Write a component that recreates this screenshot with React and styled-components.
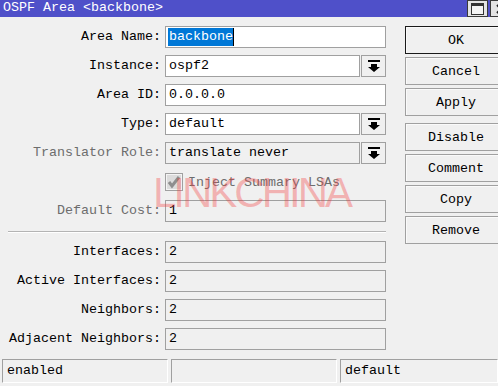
import React from 'react';
import styled, { createGlobalStyle } from 'styled-components';

const GlobalStyle = createGlobalStyle`
  html, body {
    margin: 0;
    padding: 0;
    background: #f0f0f0;
  }
  body {
    font-family: "Liberation Mono", "DejaVu Sans Mono", monospace;
    font-size: 13.33px;
  }
`;

const fields = [
  { label: 'Area Name:', value: 'backbone', selected: true },
  { label: 'Instance:', value: 'ospf2', select: true },
  { label: 'Area ID:', value: '0.0.0.0' },
  { label: 'Type:', value: 'default', select: true },
  { label: 'Translator Role:', value: 'translate never', select: true, disabled: true },
];

const stats = [
  { label: 'Interfaces:', value: '2' },
  { label: 'Active Interfaces:', value: '2' },
  { label: 'Neighbors:', value: '2' },
  { label: 'Adjacent Neighbors:', value: '2' },
];

const buttons = ['OK', 'Cancel', 'Apply', 'Disable', 'Comment', 'Copy', 'Remove'];

const DropArrow = () => (
  <svg width="12" height="12" viewBox="0 0 12 12">
    <rect x="0" y="0" width="12" height="2" fill="#000" />
    <path d="M3 4h6v3h3l-6 5l-6-5h3z" fill="#000" />
  </svg>
);

const Check = () => (
  <svg width="14" height="14" viewBox="0 0 14 14">
    <path d="M2 7l3 4l7-9" stroke="#8e8e8e" strokeWidth="3" fill="none" />
  </svg>
);

const App = () => (
  <>
    <GlobalStyle />
    <Window>
      <TitleBar>
        <span>OSPF Area &lt;backbone&gt;</span>
        <WinControls>
          <WinButton><MaxGlyph /></WinButton>
          <WinButton>
            <svg width="10" height="10" viewBox="0 0 10 10">
              <path d="M1 1l8 8M9 1l-8 8" stroke="#222" strokeWidth="2" />
            </svg>
          </WinButton>
        </WinControls>
      </TitleBar>

      <Body>
        <Form>
          {fields.map((f) => (
            <React.Fragment key={f.label}>
              <Label $disabled={f.disabled}>{f.label}</Label>
              {f.select ? (
                <SelectRow>
                  <Field $disabled={f.disabled}>{f.value}</Field>
                  <DropButton><DropArrow /></DropButton>
                </SelectRow>
              ) : (
                <Field>
                  {f.selected ? <Selected>{f.value}</Selected> : f.value}
                </Field>
              )}
            </React.Fragment>
          ))}

          <span />
          <CheckRow>
            <CheckBox><Check /></CheckBox>
            <CheckText>Inject Summary LSAs</CheckText>
          </CheckRow>

          <Label $disabled>Default Cost:</Label>
          <Field $disabled>1</Field>

          <Separator />

          {stats.map((s) => (
            <React.Fragment key={s.label}>
              <Label>{s.label}</Label>
              <Field $disabled>{s.value}</Field>
            </React.Fragment>
          ))}
        </Form>

        <Buttons>
          {buttons.map((b) => (
            <Button key={b} $primary={b === 'OK'} $split={b === 'Disable'}>{b}</Button>
          ))}
        </Buttons>
      </Body>

      <StatusBar>
        <StatusCell $width="166px">enabled</StatusCell>
        <StatusCell $width="166px" />
        <StatusCell $grow>default</StatusCell>
      </StatusBar>

      <Watermark>LINKCHINA</Watermark>
    </Window>
  </>
);

export default App;

const Window = styled.div`
  position: relative;
  width: 498px;
  height: 386px;
  overflow: hidden;
  display: flex;
  flex-direction: column;
  background: #f0f0f0;
`;

const TitleBar = styled.div`
  height: 17px;
  flex-shrink: 0;
  display: flex;
  align-items: flex-start;
  background: #4f50c9;
  color: #fff;
  padding-left: 3px;
  line-height: 16px;
  white-space: pre;
`;

const WinControls = styled.div`
  display: flex;
  gap: 2px;
  margin-left: auto;
  margin-right: -13px;
`;

const WinButton = styled.div`
  width: 19px;
  height: 15px;
  border: 1px solid #3a3a3a;
  background: #e4e4e4;
  display: flex;
  align-items: center;
  justify-content: center;
`;

const MaxGlyph = styled.span`
  width: 11px;
  height: 8px;
  border: 1px solid #333;
  border-top-width: 3px;
  background: #f4f4f4;
`;

const Body = styled.div`
  flex: 1;
  display: flex;
  gap: 19px;
  padding: 9px 0 0 8px;
`;

const Form = styled.div`
  display: grid;
  grid-template-columns: 153px 221px;
  column-gap: 4px;
  row-gap: 7px;
  align-content: start;
`;

const Label = styled.div`
  height: 22px;
  line-height: 22px;
  text-align: right;
  white-space: nowrap;
  color: ${(p) => (p.$disabled ? '#6d6d6d' : '#000')};
`;

const Field = styled.div`
  box-sizing: border-box;
  height: 22px;
  flex: 1;
  border: 1px solid #a0a0a0;
  background: ${(p) => (p.$disabled ? '#f0f0f0' : '#fff')};
  padding: 0 3px;
  line-height: 20px;
  color: #000;
  white-space: nowrap;
  overflow: hidden;
`;

const Selected = styled.span`
  display: inline-block;
  margin-left: -1px;
  padding-left: 1px;
  line-height: 18px;
  background: #0078d7;
  color: #fff;
  border-right: 1px solid #000;
`;

const SelectRow = styled.div`
  display: flex;
  gap: 1px;
`;

const DropButton = styled.div`
  box-sizing: border-box;
  width: 25px;
  height: 22px;
  border: 1px solid #a0a0a0;
  background: #f0f0f0;
  display: flex;
  align-items: center;
  justify-content: center;
`;

const CheckRow = styled.div`
  height: 22px;
  display: flex;
  align-items: center;
  gap: 5px;
`;

const CheckBox = styled.div`
  box-sizing: border-box;
  width: 18px;
  height: 18px;
  border: 1px solid #a0a0a0;
  box-shadow: inset 0 0 0 1px #f4f4f4;
  background: #dcdcdc;
  display: flex;
  align-items: center;
  justify-content: center;
`;

const CheckText = styled.span`
  color: #6d6d6d;
  white-space: nowrap;
`;

const Separator = styled.div`
  grid-column: 1 / -1;
  height: 0;
  margin-top: 2px;
  margin-bottom: 1px;
  border-top: 1px solid #b4b4b4;
  border-bottom: 1px solid #fff;
`;

const Buttons = styled.div`
  display: flex;
  flex-direction: column;
  gap: 3px;
  flex-shrink: 0;
`;

const Button = styled.div`
  box-sizing: border-box;
  width: 102px;
  height: 28px;
  margin-top: ${(p) => (p.$split ? '4px' : '0')};
  border: 1px solid ${(p) => (p.$primary ? '#1a1a1a' : '#a0a0a0')};
  box-shadow: inset 1px 1px 0 #fafafa;
  background: #f0f0f0;
  color: #000;
  display: flex;
  align-items: center;
  justify-content: center;
`;

const StatusBar = styled.div`
  height: 27px;
  flex-shrink: 0;
  display: flex;
  gap: 3px;
  padding: 0 0 3px 2px;
  box-sizing: border-box;
`;

const StatusCell = styled.div`
  box-sizing: border-box;
  width: ${(p) => p.$width || 'auto'};
  flex: ${(p) => (p.$grow ? 1 : 'none')};
  border-top: 1px solid #a0a0a0;
  border-left: 1px solid #a0a0a0;
  border-right: 1px solid #fff;
  border-bottom: 1px solid #fff;
  padding-left: 4px;
  line-height: 22px;
  color: #000;
`;

const Watermark = styled.div`
  position: absolute;
  left: 153px;
  top: 172px;
  font-family: "Liberation Sans", Arial, sans-serif;
  font-size: 42px;
  line-height: 1;
  letter-spacing: -3px;
  color: rgba(245, 60, 60, 0.35);
  pointer-events: none;
  white-space: nowrap;
`;
